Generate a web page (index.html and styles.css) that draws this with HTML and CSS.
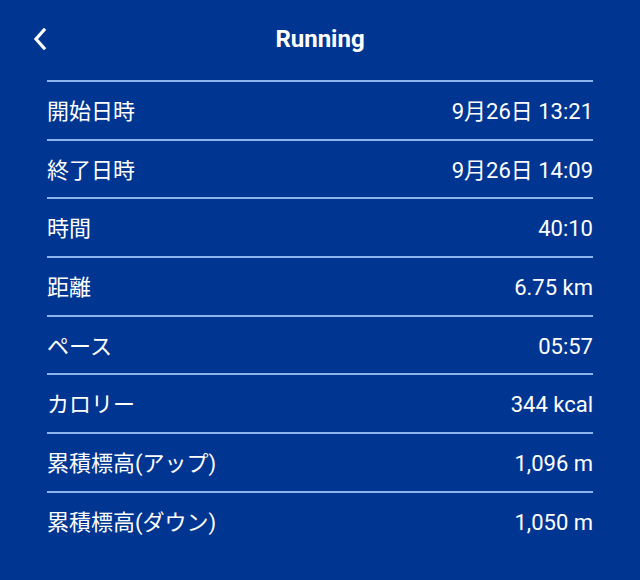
FILE: index.html
```html
<!DOCTYPE html>
<html lang="ja">
<head>
<meta charset="utf-8">
<link rel="stylesheet" href="styles.css">
</head>
<body>
<div class="screen">
  <header class="header">
    <span class="back">
      <svg width="14" height="22" viewBox="0 0 14 22"><path d="M11 2 L3 11 L11 20" fill="none" stroke="#fff" stroke-width="3.2" stroke-linecap="square" stroke-linejoin="miter"/></svg>
    </span>
    <h1 class="title">Running</h1>
  </header>
  <ul class="list">
    <li class="row"><span class="label">開始日時</span><span class="value">9月26日 13:21</span></li>
    <li class="row"><span class="label">終了日時</span><span class="value">9月26日 14:09</span></li>
    <li class="row"><span class="label">時間</span><span class="value">40:10</span></li>
    <li class="row"><span class="label">距離</span><span class="value">6.75 km</span></li>
    <li class="row"><span class="label">ペース</span><span class="value">05:57</span></li>
    <li class="row"><span class="label">カロリー</span><span class="value">344 kcal</span></li>
    <li class="row"><span class="label">累積標高(アップ)</span><span class="value">1,096 m</span></li>
    <li class="row"><span class="label">累積標高(ダウン)</span><span class="value">1,050 m</span></li>
  </ul>
</div>
</body>
</html>
```
FILE: styles.css
```css
html, body {
  margin: 0;
  padding: 0;
  background: #003691;
}
body {
  font-family: Roboto, "Noto Sans CJK JP", sans-serif;
  color: #fff;
}
.screen {
  width: 640px;
  height: 580px;
  background: #003691;
}
.header {
  position: relative;
  height: 80px;
  display: flex;
  align-items: center;
  justify-content: center;
}
.back {
  position: absolute;
  left: 33px;
  top: 28px;
  display: flex;
}
.title {
  margin: 0;
  margin-top: -2px;
  font-size: 24px;
  font-weight: 700;
  letter-spacing: 0;
}
.list {
  list-style: none;
  margin: 0 47px;
  padding: 0;
}
.row {
  box-sizing: border-box;
  height: 58.7px;
  border-top: 2px solid #8db3ee;
  padding-top: 4px;
  display: flex;
  align-items: baseline;
  justify-content: space-between;
  font-size: 22px;
  line-height: 52px;
  font-family: Roboto, "Noto Sans CJK JP", sans-serif;
}
.label,
.value {
  display: block;
}
```
